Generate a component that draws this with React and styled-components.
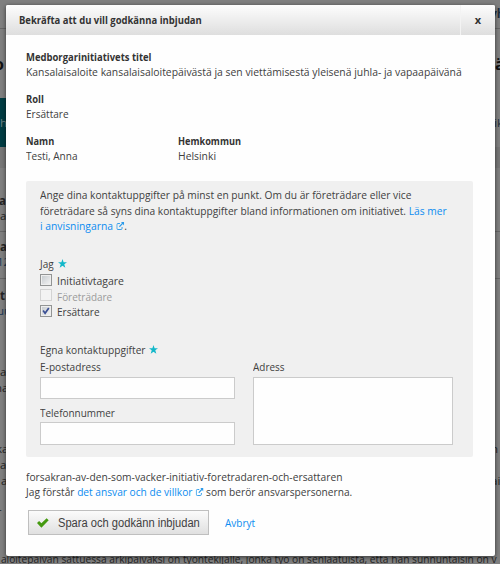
import React from 'react';
import styled, { createGlobalStyle } from 'styled-components';

const Global = createGlobalStyle`
  * { box-sizing: border-box; }
  html, body { margin: 0; padding: 0; overflow: hidden; }
`;

const Screen = styled.div`
  position: relative;
  width: 500px;
  height: 564px;
  overflow: hidden;
  background: #7f7f7f;
  color: #404040;
  font: 11.5px/15px "Open Sans", "Noto Sans", sans-serif;
`;

/* Dimmed page behind the dialog */
const Page = styled.div`
  height: 564px;
  display: flex;
  flex-direction: column;
`;
const Band = styled.div`
  height: ${p => p.$h}px;
  flex: none;
  background: ${p => p.$bg || 'transparent'};
  border-bottom: ${p => (p.$line ? '1px solid #666' : '0')};
`;
const PageRow = styled.div`
  height: 15px;
  flex: none;
  display: flex;
  justify-content: space-between;
  margin-top: ${p => p.$before || 0}px;
  color: ${p => p.$color || '#242424'};
  font-weight: ${p => (p.$bold ? 700 : 400)};
  font-size: ${p => p.$size || 11.5}px;
  white-space: nowrap;
`;
const Edge = styled.span`
  width: 6px;
  flex: none;
  overflow: hidden;
  text-indent: ${p => p.$shift || 0}px;
`;
const NavRow = styled.div`
  height: 49px;
  flex: none;
  display: flex;
  justify-content: space-between;
  line-height: 50px;
  color: #20303c;
`;
const NavTab = styled.div`
  width: 120px;
  background: #003c43;
  color: #6d8083;
  text-indent: -7px;
`;
const NavEdge = styled.div`
  width: 6px;
  overflow: hidden;
`;
const PageLine = styled.div`
  margin-top: 35px;
  padding-left: 1px;
  flex: none;
  white-space: nowrap;
  color: #242424;
  transform: scaleX(${p => p.$fit});
  transform-origin: 0 0;
`;

/* Dialog */
const Dialog = styled.section`
  position: absolute;
  left: 6px;
  top: 5px;
  width: 489px;
  height: 551px;
  display: flex;
  flex-direction: column;
  background: #fefefe;
  border-radius: 2px;
  box-shadow: 0 1px 4px rgba(0, 0, 0, 0.6);
`;
const Header = styled.header`
  height: 30px;
  flex: none;
  display: flex;
  justify-content: space-between;
  padding-left: 13px;
  border-radius: 2px 2px 0 0;
  background: linear-gradient(#fdfdfd, #dedede);
`;
const Close = styled.button`
  width: 35px;
  height: 30px;
  padding: 0;
  border: 0;
  border-left: 1px solid #f3f3f3;
  background: none;
  color: #333;
  font: 700 11px/30px "Open Sans", sans-serif;
`;
const Body = styled.div`
  display: flex;
  flex-direction: column;
  padding: 14px 21px 0 20px;
`;
const Line = styled.div`
  height: ${p => p.$h || 15}px;
  line-height: ${p => p.$h || 15}px;
  white-space: nowrap;
  font-size: ${p => (p.$bold ? 11 : 11.5)}px;
  font-weight: ${p => (p.$bold ? 700 : 400)};
  color: ${p => (p.$bold ? '#333' : p.$muted ? '#9b9b9b' : 'inherit')};
  transform: scaleX(${p => p.$fit});
  transform-origin: 0 0;
`;
const Field = styled.div`
  width: ${p => (p.$w ? p.$w + 'px' : 'auto')};
  margin-bottom: ${p => p.$after || 0}px;
`;
const Pair = styled.div`
  display: flex;
`;
const Link = styled.a`
  color: #0c8cf0;
  text-decoration: none;
`;
const Panel = styled.div`
  width: 447px;
  height: 276px;
  margin-top: 18px;
  padding: 6.3px 14px 0;
  background: #f0f0f0;
  border-radius: 2px;
`;
const Group = styled.div`
  margin-top: ${p => p.$top}px;
`;
const Legend = styled.div`
  display: flex;
  align-items: center;
  height: 15px;
`;
const LegendText = styled.div`
  width: ${p => p.$w}px;
`;
const Option = styled.label`
  display: flex;
  gap: 5px;
  height: 15.4px;
`;
const Box = styled.span`
  width: 12px;
  height: 12px;
  flex: none;
  display: flex;
  margin-top: 0.5px;
  border: 1px solid ${p => (p.$off ? '#d3d3d3' : '#929494')};
  box-shadow: inset 0 0 0 1px ${p => (p.$off ? '#f3f3f3' : '#eeeeee')};
  background: ${p => (p.$off ? '#f3f3f3' : 'linear-gradient(135deg, #c3c8cc, #f6f6f6)')};
`;
const Columns = styled.div`
  display: flex;
  gap: 18px;
  margin-top: 2px;
`;
const Column = styled.div`
  width: ${p => p.$w}px;
`;
const Input = styled.input`
  display: block;
  width: 100%;
  height: ${p => p.$h}px;
  margin: ${p => p.$top}px 0 0;
  border: 1px solid #cbcbcb;
  border-radius: 0;
  background: #fefefe;
  outline: 0;
`;
const Area = styled.textarea`
  display: block;
  width: 100%;
  height: 68px;
  margin: 2.5px 0 0;
  border: 1px solid #cbcbcb;
  border-radius: 0;
  background: #fefefe;
  resize: none;
  outline: 0;
`;
const Terms = styled.div`
  margin-top: 11.5px;
`;
const Actions = styled.div`
  display: flex;
  align-items: center;
  margin: 11px 0 0 2px;
  gap: 16px;
`;
const Save = styled.button`
  width: 181px;
  height: 25px;
  display: flex;
  align-items: center;
  gap: 9px;
  padding: 1px 0 0 8px;
  border: 1px solid #bfbfbf;
  background: linear-gradient(#fbfbfb, #e0e0e0);
  color: #404040;
  text-align: left;
`;
const SaveLabel = styled.span`
  width: 142px;
  white-space: nowrap;
  font: 12px/16px "Liberation Sans", Arial, sans-serif;
  transform: scaleX(0.928);
  transform-origin: 0 0;
`;
const Svg = styled.svg`
  display: block;
  flex: none;
`;
const InlineSvg = styled.svg`
  display: inline-block;
  margin-left: 3.5px;
  vertical-align: 0;
`;

const Star = () => (
  <Svg width="9" height="9" viewBox="0 0 9 9">
    <path d="M4.5 0 5.6 3.2H9L6.3 5.3 7.3 8.8 4.5 6.7 1.7 8.8 2.7 5.3 0 3.2h3.4z" fill="#12b7c9" />
  </Svg>
);
const External = () => (
  <InlineSvg width="9" height="8" viewBox="0 0 9 8" preserveAspectRatio="none" fill="none" stroke="#2c9bea">
    <path d="M4 1.5H1.8Q.6 1.5.6 2.7v3.6q0 1.2 1.2 1.2h3.4q1.2 0 1.2-1.2V5" />
    <path d="M3.4 4.7 7.6.8" strokeWidth="1.2" />
    <path d="M5.2 0H8.6V3.4z" fill="#2c9bea" stroke="none" />
  </InlineSvg>
);
const Tick = () => (
  <Svg width="10" height="10" viewBox="0 0 10 10" fill="none" stroke="#3a4f94" strokeWidth="1.7">
    <path d="M2.1 4.5 4.1 7.2 7.8 2" />
  </Svg>
);
const SaveTick = () => (
  <Svg width="12" height="10" viewBox="0 0 12 10">
    <path d="M0 5 2.1 2.9 4.4 5.2 9.6.2 11.7 2.2 4.4 9.7z" fill="#459a10" />
  </Svg>
);

const pageRows = [
  { before: 25, left: 'ar', bold: true, shift: -1 },
  { left: 'a', shift: 0 },
  { line: 9 },
  { before: 7, left: 'a', bold: true },
  { left: '12', color: '#1c3854', shift: -3 },
  { line: 10 },
  { before: 9, left: 't', bold: true },
  { left: 'uu', color: '#1c3854', shift: -3 },
  { before: 46, left: 'a' },
  { before: 1, left: 'na', shift: -5 },
  { before: 46, left: 'ka', shift: -4, right: 'n', rightShift: -3 },
  { before: 1, left: 'a' },
  { before: 1, left: 'a', shift: 1, right: 'ai', rightShift: -3 },
  { before: 13, left: '-', shift: -2 },
];

export default function App() {
  return (
    <>
      <Global />
      <Screen>
        <Page>
          <Band $h={6} />
          <PageRow $bold $color="#1e2c3a" $size={12}><Edge /><Edge $shift={-4}>yh</Edge></PageRow>
          <Band $h={8} $line />
          <PageRow $before={28} $bold $color="#111" $size={16}><Edge $shift={-6}>o</Edge><Edge $shift={1}>ä</Edge></PageRow>
          <Band $h={26} />
          <NavRow>
            <NavTab>nh</NavTab>
            <NavEdge>ik</NavEdge>
          </NavRow>
          <Band $h={21} $bg="#767676" />
          {pageRows.map((r, i) =>
            r.line ? (
              <Band key={i} $h={r.line} $line />
            ) : (
              <PageRow key={i} $before={r.before} $bold={r.bold} $color={r.color}>
                <Edge $shift={r.shift}>{r.left}</Edge>
                <Edge $shift={r.rightShift}>{r.right}</Edge>
              </PageRow>
            )
          )}
          <PageLine $fit={0.888}>
            aloitepäivän sattuessa arkipäiväksi on työntekijälle, jonka työ on senlaatuista, että hän sunnuntaisin on v
          </PageLine>
        </Page>

        <Dialog role="dialog">
          <Header>
            <Line $bold $h={30} $fit={0.86}>Bekräfta att du vill godkänna inbjudan</Line>
            <Close>x</Close>
          </Header>
          <Body>
            <Field $after={12}>
              <Line $bold $fit={0.86}>Medborgarinitiativets titel</Line>
              <Line $fit={0.9026}>
                Kansalaisaloite kansalaisaloitepäivästä ja sen viettämisestä yleisenä juhla- ja vapaapäivänä
              </Line>
            </Field>
            <Field $after={12}>
              <Line $bold $fit={0.86}>Roll</Line>
              <Line $fit={0.875}>Ersättare</Line>
            </Field>
            <Pair>
              <Field $w={152}>
                <Line $bold $fit={0.84}>Namn</Line>
                <Line $fit={0.873}>Testi, Anna</Line>
              </Field>
              <Field>
                <Line $bold $fit={0.835}>Hemkommun</Line>
                <Line $fit={0.9}>Helsinki</Line>
              </Field>
            </Pair>

            <Panel>
              <Line $h={15.4} $fit={0.888}>
                Ange dina kontaktuppgifter på minst en punkt. Om du är företrädare eller vice
              </Line>
              <Line $h={15.4} $fit={0.888}>
                företrädare så syns dina kontaktuppgifter bland informationen om initiativet. <Link>Läs mer</Link>
              </Line>
              <Line $h={15.4} $fit={0.898}>
                <Link>i anvisningarna<External /></Link>.
              </Line>

              <Group $top={22.7}>
                <Legend>
                  <LegendText $w={17.5}><Line $fit={0.87}>Jag</Line></LegendText>
                  <Star />
                </Legend>
                <Group $top={2.3}>
                  <Option><Box /><Line $fit={0.91}>Initiativtagare</Line></Option>
                  <Option><Box $off /><Line $muted $fit={0.865}>Företrädare</Line></Option>
                  <Option><Box><Tick /></Box><Line $fit={0.875}>Ersättare</Line></Option>
                </Group>
              </Group>

              <Group $top={22.8}>
                <Legend>
                  <LegendText $w={109}><Line $fit={0.886}>Egna kontaktuppgifter</Line></LegendText>
                  <Star />
                </Legend>
                <Columns>
                  <Column $w={195}>
                    <Line $fit={0.88}>E-postadress</Line>
                    <Input $h={22} $top={2.5} />
                    <Group $top={6}><Line $fit={0.865}>Telefonnummer</Line></Group>
                    <Input $h={23} $top={2} />
                  </Column>
                  <Column $w={200}>
                    <Line $fit={0.865}>Adress</Line>
                    <Area />
                  </Column>
                </Columns>
              </Group>
            </Panel>

            <Terms>
              <Line $h={15.4} $fit={0.892}>forsakran-av-den-som-vacker-initiativ-foretradaren-och-ersattaren</Line>
              <Line $h={15.4} $fit={0.884}>
                Jag förstår <Link>det ansvar och de villkor<External /></Link> som berör ansvarspersonerna.
              </Line>
            </Terms>
            <Actions>
              <Save><SaveTick /><SaveLabel>Spara och godkänn inbjudan</SaveLabel></Save>
              <Line $fit={0.867}><Link>Avbryt</Link></Line>
            </Actions>
          </Body>
        </Dialog>
      </Screen>
    </>
  );
}
